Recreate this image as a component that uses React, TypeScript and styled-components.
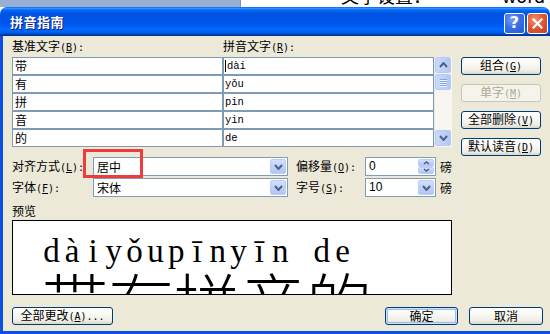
import React from "react";
import styled, { createGlobalStyle } from "styled-components";

const Global = createGlobalStyle`
  html, body { margin: 0; padding: 0; background: #fff; }
  body { width: 550px; height: 334px; overflow: hidden; font-family: "Noto Sans CJK SC", sans-serif; }
  * { box-sizing: border-box; }
`;

const FRAME = "#0b50e2";

const Screen = styled.div`
  width: 550px;
  height: 334px;
  overflow: hidden;
  display: flex;
  flex-direction: column;
`;

const TopStrip = styled.div`
  height: 7px;
  flex-shrink: 0;
  display: flex;
  overflow: hidden;
`;

const Desk = styled.div`
  width: 241px;
  background: #98aed3;
  border-right: 1px solid #7f95bb;
`;

const Doc = styled.div`
  flex: 1;
  background: #fff;
  display: flex;
  overflow: hidden;
`;

const DocText = styled.span<{ $x: number }>`
  margin-left: ${p => p.$x}px;
  margin-top: -15px;
  font: 18px/20px "Noto Sans CJK SC", sans-serif;
  color: #000;
  white-space: nowrap;
`;

const Dialog = styled.div`
  flex: 1;
  min-height: 0;
  display: flex;
  flex-direction: column;
`;

const TitleBar = styled.div`
  height: 29px;
  flex-shrink: 0;
  border-radius: 7px 7px 0 0;
  background: linear-gradient(
    180deg,
    #0058ee 0%,
    #3593ff 4%,
    #288eff 6%,
    #127dff 8%,
    #036ffc 10%,
    #0262ee 14%,
    #0057e5 20%,
    #0054e3 24%,
    #0055eb 56%,
    #005bf5 66%,
    #026afe 76%,
    #0062ef 86%,
    #0052d6 92%,
    #0040ab 94%,
    #003092 100%
  );
  display: flex;
  align-items: center;
  padding: 0 2px 0 10px;
`;

const Title = styled.div`
  flex: 1;
  color: #fff;
  font: bold 13px/1 "Noto Sans CJK SC", sans-serif;
  letter-spacing: 0.5px;
  text-shadow: 1px 1px 0 #0a1a7a;
`;

const CaptionGroup = styled.div`
  display: flex;
  gap: 2px;
  padding-top: 3px;
`;

const CaptionButton = styled.div<{ $kind: "help" | "close" }>`
  width: 21px;
  height: 21px;
  border: 1px solid #fff;
  border-radius: 3px;
  display: flex;
  align-items: center;
  justify-content: center;
  color: #fff;
  font: bold 16px/1 "DejaVu Sans", sans-serif;
  background: ${p =>
    p.$kind === "help"
      ? "radial-gradient(circle at 35% 30%, #6f9cf7 0%, #3b6fe6 45%, #2356d6 100%)"
      : "radial-gradient(circle at 35% 30%, #f2946f 0%, #e15a33 45%, #c8401b 100%)"};
`;

const Body = styled.div`
  flex: 1;
  min-height: 0;
  background: #ece9d8;
  border-left: 3px solid ${FRAME};
  border-bottom: 3px solid ${FRAME};
  padding-left: 9px;
  display: flex;
  flex-direction: column;
  font: 12px/16px "Noto Sans CJK SC", sans-serif;
  color: #000;
`;

const MainRow = styled.div`
  display: flex;
`;

const LeftArea = styled.div`
  width: 440px;
  display: flex;
  flex-direction: column;
`;

const HeaderRow = styled.div`
  height: 21px;
  display: grid;
  grid-template-columns: 211px 211px;
  align-items: center;
`;

const Mn = styled.span`
  font-family: "DejaVu Sans Mono", monospace;
  font-size: 10px;
`;

const TableRow = styled.div`
  display: flex;
  gap: 1px;
  height: 90px;
`;

const Grid = styled.div`
  width: 422px;
  background: #7f9bb6;
  padding: 1px;
  display: grid;
  grid-template-columns: 209px 209px;
  grid-auto-rows: 16px;
  column-gap: 2px;
  row-gap: 2px;
`;

const Cell = styled.div<{ $mono?: boolean }>`
  background: #fff;
  padding-left: ${p => (p.$mono ? 1 : 2)}px;
  white-space: nowrap;
  font: ${p =>
    p.$mono
      ? '10.5px/16px "Liberation Mono", monospace'
      : '12px/16px "Noto Sans CJK SC", sans-serif'};
  display: flex;
  align-items: center;
`;

const Caret = styled.span`
  display: inline-block;
  width: 1px;
  height: 12px;
  background: #000;
  margin-right: 1px;
`;

const ScrollBar = styled.div`
  width: 17px;
  background: #f7f6f1;
  display: flex;
  flex-direction: column;
`;

const ScrollPart = styled.div`
  height: 16px;
  margin: 0 1px 1px 0;
  border: 1px solid #b8cbf5;
  border-radius: 2px;
  background: linear-gradient(90deg, #cad9fd 0%, #bccff9 60%, #b2c7f6 100%);
  display: flex;
  flex-direction: column;
  align-items: center;
  justify-content: center;
  gap: 1px;
`;

const Spacer = styled.div`
  flex: 1;
`;

const Grip = styled.span`
  width: 7px;
  height: 1px;
  background: #8aa4dd;
  box-shadow: 0 1px 0 #eef3ff;
`;

const FormRow = styled.div<{ $top: number }>`
  position: relative;
  height: 19px;
  margin-top: ${p => p.$top}px;
  display: flex;
  align-items: center;
`;

const FieldLabel = styled.span<{ $w: number; $ml?: number }>`
  width: ${p => p.$w}px;
  margin-left: ${p => p.$ml ?? 0}px;
  white-space: nowrap;
`;

const Combo = styled.div<{ $w: number }>`
  width: ${p => p.$w}px;
  height: 19px;
  border: 1px solid #7f9db9;
  background: #fff;
  display: flex;
`;

const ComboText = styled.span<{ $latin?: boolean }>`
  flex: 1;
  padding-left: 3px;
  line-height: 17px;
  font-family: ${p => (p.$latin ? '"Liberation Sans", sans-serif' : '"Noto Sans CJK SC", sans-serif')};
`;

const DropButton = styled.span`
  width: 16px;
  margin: 1px;
  border: 1px solid #bccef6;
  border-radius: 2px;
  background: linear-gradient(180deg, #d3e0fd 0%, #bfd1fa 50%, #b2c6f6 100%);
  display: flex;
  align-items: center;
  justify-content: center;
`;

const SpinButtons = styled.span`
  width: 16px;
  margin: 1px;
  display: flex;
  flex-direction: column;
`;

const SpinHalf = styled.span`
  flex: 1;
  border: 1px solid #bccef6;
  border-radius: 2px;
  background: linear-gradient(180deg, #d3e0fd 0%, #bfd1fa 50%, #b2c6f6 100%);
  display: flex;
  align-items: center;
  justify-content: center;
`;

const Unit = styled.span`
  margin-left: 4px;
`;

const RedMark = styled.div`
  position: absolute;
  left: 71px;
  top: -8px;
  width: 60px;
  height: 29px;
  border: 3px solid #f03b3b;
  pointer-events: none;
`;

const PreviewLabel = styled.div`
  padding-top: 6px;
  line-height: 16px;
  margin-bottom: 1px;
`;

const Preview = styled.div`
  width: 440px;
  height: 75px;
  border: 1px solid #000;
  background: #fff;
  overflow: hidden;
`;

const PinyinLine = styled.div`
  display: flex;
  margin-top: 11px;
  padding-left: 28px;
  height: 38px;
  font: 33px/38px "Liberation Serif", serif;
`;

const PyChar = styled.span`
  width: 20.8px;
  flex-shrink: 0;
  text-align: center;
`;

const HanziLine = styled.div`
  margin-top: -3px;
  height: 27px;
  overflow: hidden;
  padding-left: 29px;
  font: 300 66px/66px "Noto Sans CJK SC", sans-serif;
  white-space: nowrap;
`;

const ButtonCol = styled.div`
  margin-left: 9px;
  padding-top: 21px;
  width: 80px;
  display: flex;
  flex-direction: column;
  gap: 9px;
`;

const XPButton = styled.button<{ $w?: number; $default?: boolean }>`
  width: ${p => p.$w ?? 80}px;
  height: 18px;
  padding: 0;
  border: 1px solid ${p => (p.disabled ? "#c9c7ba" : "#003c74")};
  border-radius: 3px;
  background: ${p =>
    p.disabled
      ? "#f5f4ea"
      : "linear-gradient(180deg, #ffffff 0%, #f8f7f2 45%, #eeede6 80%, #d9d5c9 100%)"};
  color: ${p => (p.disabled ? "#aca899" : "#000")};
  font: 12px/16px "Noto Sans CJK SC", sans-serif;
  box-shadow: ${p =>
    p.$default ? "inset 0 0 0 1px #cfe3fd, inset 0 0 0 2px #9dbcec" : "none"};
  display: flex;
  align-items: center;
  justify-content: center;
  white-space: nowrap;
`;

const ButtonLabel = styled.span`
  line-height: 16px;
`;

const BottomRow = styled.div`
  margin-top: 12px;
  padding-right: 7px;
  display: flex;
  justify-content: space-between;
`;

const RightGroup = styled.div`
  display: flex;
  gap: 11px;
`;

const Chevron = ({ up = false, small = false }: { up?: boolean; small?: boolean }) => {
  const w = small ? 7 : 9;
  const h = small ? 4 : 6;
  const d = up
    ? `M1 ${h - 1} L${w / 2} 1 L${w - 1} ${h - 1}`
    : `M1 1 L${w / 2} ${h - 1} L${w - 1} 1`;
  return (
    <svg width={w} height={h} viewBox={`0 0 ${w} ${h}`}>
      <path d={d} stroke="#4d6185" strokeWidth={small ? 1.6 : 2} fill="none" />
    </svg>
  );
};

const CloseX = () => (
  <svg width="11" height="11" viewBox="0 0 11 11">
    <path d="M1.5 1.5 L9.5 9.5 M9.5 1.5 L1.5 9.5" stroke="#fff" strokeWidth="2.2" strokeLinecap="square" />
  </svg>
);

const Key = ({ k, tail = ":" }: { k: string; tail?: string }) => (
  <Mn>
    (<u>{k}</u>){tail}
  </Mn>
);

const rows: [string, string][] = [
  ["带", "dài"],
  ["有", "yǒu"],
  ["拼", "pin"],
  ["音", "yin"],
  ["的", "de"],
];

const pinyinPreview = "dàiyǒupīnyīn de".split("");

export default function App() {
  return (
    <>
      <Global />
      <Screen>
        <TopStrip>
          <Desk />
          <Doc>
            <DocText $x={100}>文字设置：</DocText>
            <DocText $x={71}>word 编</DocText>
          </Doc>
        </TopStrip>
        <Dialog>
          <TitleBar>
            <Title>拼音指南</Title>
            <CaptionGroup>
              <CaptionButton $kind="help">?</CaptionButton>
              <CaptionButton $kind="close">
                <CloseX />
              </CaptionButton>
            </CaptionGroup>
          </TitleBar>
          <Body>
            <MainRow>
              <LeftArea>
                <HeaderRow>
                  <span>
                    基准文字<Key k="B" />
                  </span>
                  <span>
                    拼音文字<Key k="R" />
                  </span>
                </HeaderRow>
                <TableRow>
                  <Grid>
                    {rows.map(([h, p], i) => (
                      <React.Fragment key={h}>
                        <Cell>{h}</Cell>
                        <Cell $mono>
                          {i === 0 && <Caret />}
                          {p}
                        </Cell>
                      </React.Fragment>
                    ))}
                  </Grid>
                  <ScrollBar>
                    <ScrollPart>
                      <Chevron up />
                    </ScrollPart>
                    <ScrollPart>
                      <Grip />
                      <Grip />
                      <Grip />
                      <Grip />
                    </ScrollPart>
                    <Spacer />
                    <ScrollPart>
                      <Chevron />
                    </ScrollPart>
                  </ScrollBar>
                </TableRow>
                <FormRow $top={10}>
                  <FieldLabel $w={81}>
                    对齐方式<Key k="L" />
                  </FieldLabel>
                  <Combo $w={195}>
                    <ComboText>居中</ComboText>
                    <DropButton>
                      <Chevron />
                    </DropButton>
                  </Combo>
                  <FieldLabel $w={69} $ml={8}>
                    偏移量<Key k="O" />
                  </FieldLabel>
                  <Combo $w={71}>
                    <ComboText $latin>0</ComboText>
                    <SpinButtons>
                      <SpinHalf>
                        <Chevron up small />
                      </SpinHalf>
                      <SpinHalf>
                        <Chevron small />
                      </SpinHalf>
                    </SpinButtons>
                  </Combo>
                  <Unit>磅</Unit>
                  <RedMark />
                </FormRow>
                <FormRow $top={2}>
                  <FieldLabel $w={81}>
                    字体<Key k="F" />
                  </FieldLabel>
                  <Combo $w={195}>
                    <ComboText>宋体</ComboText>
                    <DropButton>
                      <Chevron />
                    </DropButton>
                  </Combo>
                  <FieldLabel $w={69} $ml={8}>
                    字号<Key k="S" />
                  </FieldLabel>
                  <Combo $w={71}>
                    <ComboText $latin>10</ComboText>
                    <DropButton>
                      <Chevron />
                    </DropButton>
                  </Combo>
                  <Unit>磅</Unit>
                </FormRow>
                <PreviewLabel>预览</PreviewLabel>
                <Preview>
                  <PinyinLine>
                    {pinyinPreview.map((c, i) => (
                      <PyChar key={i}>{c === " " ? "\u00a0" : c}</PyChar>
                    ))}
                  </PinyinLine>
                  <HanziLine>带有拼音的</HanziLine>
                </Preview>
              </LeftArea>
              <ButtonCol>
                <XPButton>
                  <ButtonLabel>
                    组合<Key k="G" tail="" />
                  </ButtonLabel>
                </XPButton>
                <XPButton disabled>
                  <ButtonLabel>
                    单字<Key k="M" tail="" />
                  </ButtonLabel>
                </XPButton>
                <XPButton>
                  <ButtonLabel>
                    全部删除<Key k="V" tail="" />
                  </ButtonLabel>
                </XPButton>
                <XPButton>
                  <ButtonLabel>
                    默认读音<Key k="D" tail="" />
                  </ButtonLabel>
                </XPButton>
              </ButtonCol>
            </MainRow>
            <BottomRow>
              <XPButton $w={101}>
                <ButtonLabel>
                  全部更改<Key k="A" tail="..." />
                </ButtonLabel>
              </XPButton>
              <RightGroup>
                <XPButton $w={73} $default>
                  <ButtonLabel>确定</ButtonLabel>
                </XPButton>
                <XPButton $w={74}>
                  <ButtonLabel>取消</ButtonLabel>
                </XPButton>
              </RightGroup>
            </BottomRow>
          </Body>
        </Dialog>
      </Screen>
    </>
  );
}
